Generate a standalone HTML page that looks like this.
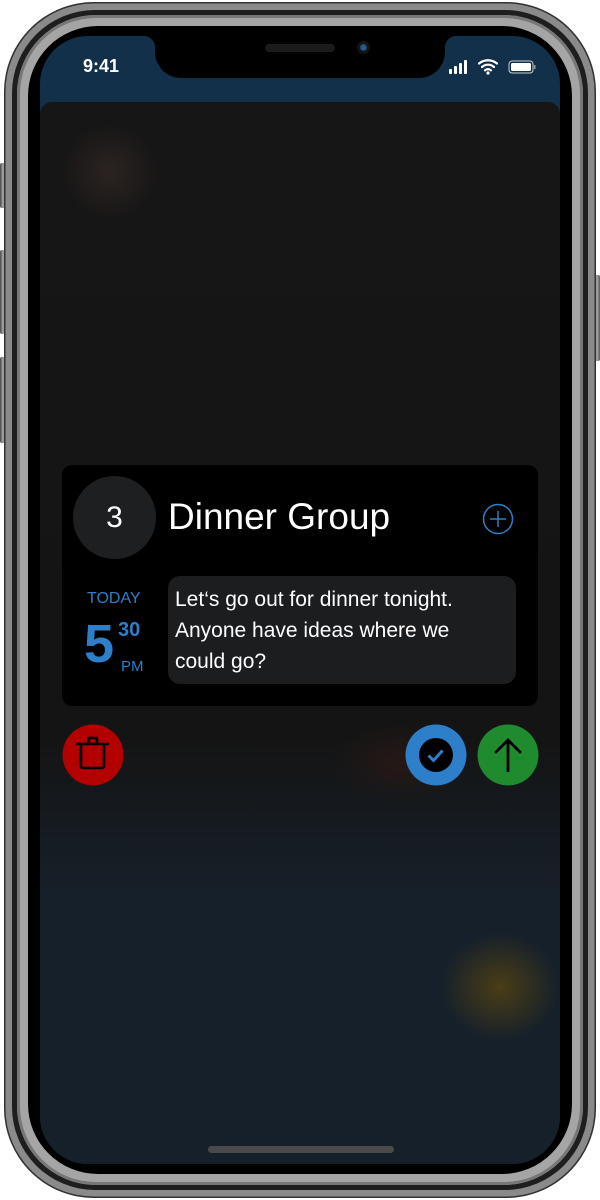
<!DOCTYPE html>
<html><head><meta charset="utf-8">
<style>
*{margin:0;padding:0;box-sizing:border-box}
body{width:600px;height:1200px;background:#fff;position:relative;overflow:hidden;font-family:"Liberation Sans",sans-serif}
.btn{position:absolute;background:linear-gradient(90deg,#444,#aaa,#555);border-radius:2px}
.body{position:absolute;left:4px;top:2px;width:592px;height:1196px;border-radius:90px;background:#8a8a8a;box-shadow:inset 0 0 0 1.5px #333}
.ring1{position:absolute;left:12px;top:10px;width:576px;height:1180px;border-radius:83px;background:#1e1e1e}
.ring2{position:absolute;left:17px;top:15px;width:566px;height:1170px;border-radius:79px;background:#a5a5a5;box-shadow:inset 0 0 0 3px #777}
.bezel{position:absolute;left:28px;top:26px;width:544px;height:1148px;border-radius:70px;background:#000}
.screen{position:absolute;left:40px;top:36px;width:520px;height:1128px;border-radius:48px;overflow:hidden;background:#12304a}
.sheet{position:absolute;left:0;top:66px;width:520px;height:1062px;border-radius:12px 12px 0 0;background:linear-gradient(#161616 0%,#141414 60%,#16202a 75%,#15202b 100%)}
.notch{position:absolute;left:155px;top:36px;width:290px;height:42px;background:#000;border-radius:0 0 26px 26px}
.notch:before,.notch:after{content:"";position:absolute;top:0;width:12px;height:12px}
.notch:before{left:-12px;background:radial-gradient(circle at 0 100%,transparent 12px,#000 12.5px)}
.notch:after{right:-12px;background:radial-gradient(circle at 100% 100%,transparent 12px,#000 12.5px)}
.time{position:absolute;left:83px;top:56px;color:#fff;font-size:18px;font-weight:bold}
.card{position:absolute;left:62px;top:465px;width:476px;height:241px;background:#000;border-radius:10px}
.avatar{position:absolute;left:11px;top:11px;width:83px;height:83px;border-radius:50%;background:#1e1f21;color:#fff;font-size:30px;text-align:center;line-height:83px}
.title{position:absolute;left:106px;top:31px;color:#fff;font-size:37px}
.bubble{position:absolute;left:106px;top:111px;width:348px;height:108px;border-radius:12px;background:#1c1d1f;color:#fff;font-size:21px;line-height:31px;padding:8px 0 0 7px}
.blue{color:#2d7fc9}
</style></head><body>
<div class="btn" style="left:0;top:163px;width:6px;height:45px"></div>
<div class="btn" style="left:0;top:250px;width:6px;height:84px"></div>
<div class="btn" style="left:0;top:357px;width:6px;height:86px"></div>
<div class="btn" style="left:594px;top:275px;width:6px;height:86px"></div>
<div class="body"></div><div class="ring1"></div><div class="ring2"></div><div class="bezel"></div>
<div class="screen">
 <div class="sheet">
  <div style="position:absolute;left:20px;top:20px;width:100px;height:100px;border-radius:50%;background:radial-gradient(#2c2320,transparent 70%)"></div>
  <div style="position:absolute;left:400px;top:830px;width:120px;height:110px;border-radius:50%;background:radial-gradient(#4a3d16,transparent 70%)"></div>
  <div style="position:absolute;left:290px;top:620px;width:140px;height:80px;border-radius:50%;background:radial-gradient(#261816,transparent 70%)"></div>
 </div>
</div>
<div class="notch"></div>
<div style="position:absolute;left:265px;top:44px;width:70px;height:8px;border-radius:4px;background:#1a1a1a"></div>
<div style="position:absolute;left:357px;top:41px;width:13px;height:13px;border-radius:50%;background:radial-gradient(#2a5a90 25%,#111 45%,#1a1a1a)"></div>
<div class="time">9:41</div>
<svg style="position:absolute;left:448px;top:59px" width="90" height="18">
 <rect x="1" y="10" width="3" height="5" rx="1" fill="#fff"/><rect x="6" y="7" width="3" height="8" rx="1" fill="#fff"/><rect x="11" y="4" width="3" height="11" rx="1" fill="#fff"/><rect x="16" y="1" width="3" height="14" rx="1" fill="#fff"/>
 <path d="M31 4.5a14 14 0 0 1 18 0M34 8a9 9 0 0 1 12 0M37 11.3a4.5 4.5 0 0 1 6 0" stroke="#fff" stroke-width="2.2" fill="none" stroke-linecap="round"/><circle cx="40" cy="14" r="1.6" fill="#fff"/>
 <rect x="61" y="2" width="24" height="12" rx="3" fill="none" stroke="#ccc" stroke-width="1"/><rect x="63" y="4" width="20" height="8" rx="1.5" fill="#fff"/><rect x="86" y="6" width="1.5" height="4" fill="#999"/>
</svg>
<div class="card">
 <div class="avatar">3</div>
 <div class="title">Dinner Group</div>
 <svg style="position:absolute;left:420px;top:38px" width="32" height="32"><circle cx="16" cy="16" r="14.5" fill="none" stroke="#2d7fc9" stroke-width="1.5"/><path d="M16 8v16M8 16h16" stroke="#2d7fc9" stroke-width="1.5"/></svg>
 <div class="blue" style="position:absolute;left:25px;top:125px;font-size:16px">TODAY</div>
 <div class="blue" style="position:absolute;left:22px;top:150px;font-size:54px;font-weight:bold;line-height:58px">5</div>
 <div class="blue" style="position:absolute;left:56px;top:154px;font-size:20px;font-weight:bold">30</div>
 <div class="blue" style="position:absolute;left:59px;top:193px;font-size:15px">PM</div>
 <div class="bubble">Let‘s go out for dinner tonight.<br>Anyone have ideas where we<br>could go?</div>
</div>
<svg style="position:absolute;left:62px;top:724px" width="62" height="62"><circle cx="31" cy="31" r="30.5" fill="#b30000"/><path d="M14 20h33M26.5 20v-6h8.5v6M19 20v22a2 2 0 0 0 2 2h19a2 2 0 0 0 2-2v-22" stroke="#000" stroke-width="2.6" fill="none" stroke-linejoin="round"/></svg>
<svg style="position:absolute;left:405px;top:724px" width="62" height="62"><circle cx="31" cy="31" r="30.5" fill="#2d7fc9"/><circle cx="31" cy="31" r="17" fill="#000"/><path d="M23.5 31.5l5 5 9-10" stroke="#2d7fc9" stroke-width="3" fill="none"/></svg>
<svg style="position:absolute;left:477px;top:724px" width="62" height="62"><circle cx="31" cy="31" r="30.5" fill="#1f8a2e"/><path d="M31 48V16M18 29l13-13 13 13" stroke="#000" stroke-width="2.8" fill="none"/></svg>
<div style="position:absolute;left:208px;top:1146px;width:186px;height:7px;border-radius:4px;background:#4a4a4a"></div>
</body></html>
